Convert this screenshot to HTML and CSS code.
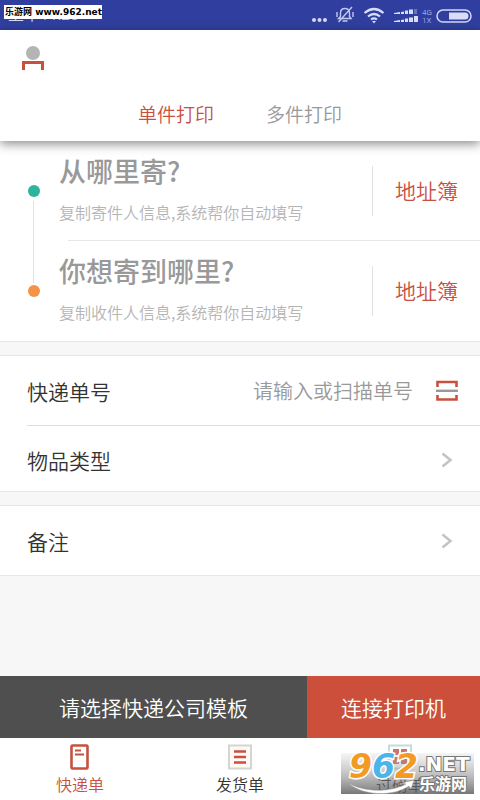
FILE: index.html
```html
<!DOCTYPE html>
<html lang="zh-CN">
<head>
<meta charset="utf-8">
<meta name="viewport" content="width=device-width, initial-scale=1">
<title>单件打印</title>
<link rel="stylesheet" href="styles.css">
</head>
<body>
<div class="app">
  <div class="status">
    <span class="clock">上午11:28</span>
    <svg class="status-icons" width="170" height="24" viewBox="-6 0 170 24" aria-hidden="true">
      <g fill="#d3d8f4">
        <circle cx="-2" cy="16" r="2"/><circle cx="3.500" cy="16" r="2"/><circle cx="9" cy="16" r="2"/>
      </g>
      <g fill="none" stroke="#c3c9ee" stroke-width="1.400">
        <path d="M22.500 14.500h12.500l-1.500-2V9c0-3-2-4.500-4.500-4.500S24.500 6 24.500 9v3.500zM26.500 17h5M21 8v5M37 8v5M22.500 18L36 3"/>
      </g>
      <g fill="none" stroke="#d9ddf8" stroke-width="2.200">
        <path d="M48.500 9q9.500-8 19 0M52 12.500q6-5 12 0M55 15.500q3-2.300 6 0"/>
      </g>
      <path d="M56 17h4l-2 2.500z" fill="#d9ddf8"/>
      <g fill="#d9ddf8">
        <path d="M78 9l6-1v2h-6zM85 8l3-.5V10h-3zM89 6.500h3V10h-3zM93 5.500h4V10h-4z"/>
        <path d="M98 5h3v5h-3z" fill="#6672c4"/>
        <path d="M78 17l6-1v2h-6zM85 16l3-.5V18h-3zM89 14.500h3V18h-3zM93 13.500h4V18h-4zM98 12h4v6h-4z"/>
      </g>
      <g fill="#c3c9ee" font-family="Roboto, sans-serif" font-size="8">
        <text x="106" y="11">4G</text><text x="106" y="19">1X</text>
      </g>
      <rect x="121" y="6" width="34" height="12" rx="6" fill="none" stroke="#d3d8f4" stroke-width="1.500"/>
      <path d="M133 8.500h16a3.500 3.500 0 0 1 0 7h-16z" fill="#d9ddf8"/>
    </svg>
    <span class="site-tag">乐游网 www.962.net</span>
  </div>

  <header class="header">
    <button class="profile" aria-label="我的">
      <svg width="24" height="26" viewBox="0 0 24 26" aria-hidden="true">
        <circle cx="12" cy="8" r="7" fill="#b4b4b4"/>
        <path d="M2.500 25v-7.500h19V25" fill="none" stroke="#c8503f" stroke-width="3"/>
      </svg>
    </button>
    <nav class="tabs">
      <button class="tab active">单件打印</button>
      <button class="tab">多件打印</button>
    </nav>
  </header>

  <main class="main">
    <section class="card route">
      <div class="stop">
        <span class="marker from"></span>
        <button class="place"><span class="title">从哪里寄?</span><span class="hint">复制寄件人信息,系统帮你自动填写</span></button>
        <button class="book">地址簿</button>
      </div>
      <div class="stop">
        <span class="marker to"></span>
        <button class="place"><span class="title">你想寄到哪里?</span><span class="hint">复制收件人信息,系统帮你自动填写</span></button>
        <button class="book">地址簿</button>
      </div>
    </section>

    <section class="card">
      <div class="row">
        <label for="number">快递单号</label>
        <input id="number" type="text" placeholder="请输入或扫描单号">
        <button class="scan" aria-label="扫描">
          <svg width="22" height="22" viewBox="0 0 22 22" aria-hidden="true">
            <path d="M1.500 7V2h19v5M1.500 15v4.500h19V15" fill="none" stroke="#c8503f" stroke-width="2.600"/>
            <path d="M0 10.800h22" stroke="#999" stroke-width="2.400"/>
          </svg>
        </button>
      </div>
      <button class="row second">
        <span>物品类型</span>
        <svg class="chevron" width="12" height="16" viewBox="0 0 12 16" aria-hidden="true"><path d="M1.500 1.500L9.500 8l-8 6.500" fill="none" stroke="#c4c4c4" stroke-width="2.600"/></svg>
      </button>
    </section>

    <section class="card">
      <button class="row">
        <span>备注</span>
        <svg class="chevron" width="12" height="16" viewBox="0 0 12 16" aria-hidden="true"><path d="M1.500 1.500L9.500 8l-8 6.500" fill="none" stroke="#c4c4c4" stroke-width="2.600"/></svg>
      </button>
    </section>
  </main>

  <div class="actions">
    <button class="template">请选择快递公司模板</button>
    <button class="connect">连接打印机</button>
  </div>

  <nav class="bottom">
    <a class="item current" href="#express">
      <svg width="24" height="26" viewBox="0 0 24 26" aria-hidden="true">
        <rect x="3.500" y="1.500" width="16" height="23" rx="1" fill="#fff" stroke="#c8503f" stroke-width="2.600"/>
        <path d="M7 6.500h6M7 10.500h9" stroke="#c8503f" stroke-width="2"/>
      </svg>
      <span>快递单</span>
    </a>
    <a class="item" href="#delivery">
      <svg width="24" height="26" viewBox="0 0 24 26" aria-hidden="true">
        <rect x="1" y="1.500" width="22" height="23" fill="#fffaf5" stroke="#d5d5d0" stroke-width="2"/>
        <path d="M6 7.500h12M6 13h12M6 18.500h12" stroke="#c8503f" stroke-width="2.400"/>
      </svg>
      <span>发货单</span>
    </a>
    <a class="item" href="#weigh">
      <svg width="24" height="26" viewBox="0 0 24 26" aria-hidden="true">
        <rect x="1" y="1.500" width="22" height="23" fill="#fff" stroke="#c5dcd8" stroke-width="2"/>
        <path d="M5 5h6v6H5zM13 5h6v6h-6zM5 13h6v7H5zM13 13h6v7h-6z" fill="#d0706b"/>
      </svg>
      <span>过磅单</span>
    </a>
    <svg class="watermark" width="134" height="48" viewBox="0 0 134 48" role="img" aria-label="962.NET 乐游网">
      <defs>
        <linearGradient id="shade" x1="0" y1="0" x2="0" y2="1">
          <stop offset="0" stop-color="#999" stop-opacity="0.1"/>
          <stop offset=".5" stop-color="#888" stop-opacity=".5"/>
          <stop offset="1" stop-color="#555" stop-opacity=".8"/>
        </linearGradient>
      </defs>
      <path d="M0 7h133v41H0z" fill="url(#shade)"/>
      <path d="M7 37C25 47 50 46 65 38l-4-1 12-3-3 9-2-3C52 51 22 50 7 37z" fill="#fff" stroke="#999" stroke-width=".5"/>
      <g font-family="DejaVu Sans, sans-serif" font-weight="700" font-style="italic" font-size="33" stroke="#fff" stroke-width="3" paint-order="stroke">
        <text x="8" y="32" fill="#f39a25">9</text>
        <text x="31" y="32" fill="#4bb4e8">6</text>
        <text x="54" y="32" fill="#f39a25">2</text>
      </g>
      <g fill="#fff" stroke="#777" stroke-width="2" paint-order="stroke" font-weight="700">
        <text x="77" y="25" font-family="DejaVu Sans, sans-serif" font-size="20">.NET</text>
        <text x="78" y="44" font-family="Noto Sans CJK SC, sans-serif" font-size="16">乐游网</text>
      </g>
    </svg>
  </nav>
</div>
</body>
</html>
```

FILE: styles.css
```css
* {
  box-sizing: border-box;
}

body {
  margin: 0;
  background: #f7f7f7;
  color: #333;
  font-family: "Noto Sans CJK SC", sans-serif;
  font-size: 21px;
  font-weight: 350;
}

button,
input {
  margin: 0;
  padding: 0;
  border: 0;
  background: none;
  color: inherit;
  font: inherit;
}

svg {
  display: block;
  flex: none;
}

.app {
  display: flex;
  flex-direction: column;
  min-height: 100vh;
}

.status {
  position: relative;
  display: flex;
  align-items: center;
  justify-content: space-between;
  height: 30px;
  padding: 0 0 0 8px;
  background: #303f9f;
}

.clock {
  color: #d3d8f4;
  font-family: Roboto, "Noto Sans CJK SC", sans-serif;
  font-size: 16px;
  line-height: 24px;
}

.status-icons {
  margin-top: 2px;
}

.site-tag {
  position: absolute;
  top: 5px;
  left: 4px;
  width: 98px;
  padding-left: 1px;
  background: #fff;
  color: #000;
  font-family: "DejaVu Sans", "Noto Sans CJK SC", sans-serif;
  font-size: 9px;
  font-weight: 700;
  line-height: 14px;
  white-space: nowrap;
}

.header {
  position: relative;
  padding: 15px 21px 12px;
  background: #fff;
  box-shadow: 0 3px 10px rgba(0, 0, 0, 0.45);
}

.profile {
  display: block;
}

.tabs {
  display: flex;
  justify-content: center;
  gap: 52px;
  padding-top: 28px;
}

.tab {
  color: #999;
  font-size: 19px;
  line-height: 30px;
}

.tab.active {
  color: #c8503f;
}

.main {
  display: flex;
  flex: 1;
  flex-direction: column;
  gap: 13px;
}

.card {
  border-top: 1px solid #e6e6e6;
  border-bottom: 1px solid #e6e6e6;
  background: #fff;
}

.route {
  border-top: 0;
}

.stop {
  position: relative;
  display: flex;
  align-items: center;
  height: 100px;
  padding-left: 28px;
}

.stop + .stop::before {
  content: "";
  position: absolute;
  top: -1px;
  right: 0;
  left: 68px;
  height: 1px;
  background: #e6e6e6;
}

.stop:first-child::after {
  content: "";
  position: absolute;
  top: 60px;
  left: 33px;
  width: 1px;
  height: 82px;
  background: #e2e2e2;
}

.marker {
  width: 12px;
  height: 12px;
  border-radius: 50%;
}

.from {
  background: #2cb59a;
}

.to {
  background: #f4924a;
}

.place {
  display: flex;
  flex: 1;
  flex-direction: column;
  gap: 8px;
  padding: 0 0 4px 19px;
  text-align: left;
}

.title {
  color: #999;
  font-size: 27px;
  font-weight: 500;
  line-height: 38px;
}

.hint {
  color: #b5b5b5;
  font-size: 16px;
  line-height: 28px;
}

.book {
  height: 50px;
  padding: 0 22px 2px;
  border-left: 1px solid #e2e2e2;
  color: #c8503f;
}

.row {
  display: flex;
  align-items: center;
  width: 100%;
  height: 69px;
  padding: 0 22px 0 27px;
  text-align: left;
}

.row.second {
  position: relative;
  height: 66px;
  padding-top: 4px;
}

.row.second::before {
  content: "";
  position: absolute;
  top: 0;
  right: 0;
  left: 27px;
  height: 1px;
  background: #dedede;
}

.row input {
  flex: 1;
  min-width: 0;
  font-size: 20px;
  text-align: right;
}

.row input::placeholder {
  color: #999;
  opacity: 1;
}

.scan {
  margin-left: 23px;
}

.chevron {
  margin-right: 5px;
  margin-left: auto;
}

.actions {
  display: flex;
  height: 62px;
  color: #fff;
}

.template {
  flex: 307;
  background: #4f4f4f;
}

.connect {
  flex: 173;
  background: #cb4f3a;
}

.bottom {
  position: relative;
  display: flex;
  height: 62px;
  padding-top: 6px;
  background: #fff;
}

.item {
  display: flex;
  flex: 1;
  flex-direction: column;
  align-items: center;
  color: #333;
  font-size: 16px;
  line-height: 28px;
  text-decoration: none;
}

.item.current {
  color: #c8503f;
}

.watermark {
  position: absolute;
  right: 5px;
  bottom: 6px;
}
```
